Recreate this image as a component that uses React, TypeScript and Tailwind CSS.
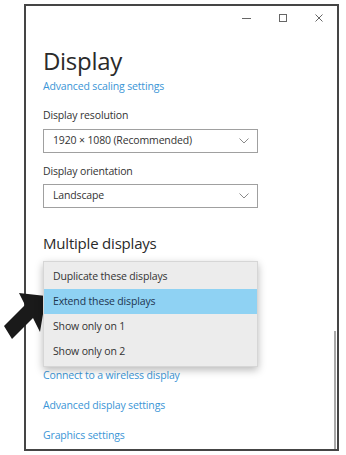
import React from 'react';

const font = { fontFamily: '"Open Sans", "Noto Sans", Arial, sans-serif' };

const Chevron: React.FC = () => (
    <svg width="10" height="6" viewBox="0 0 10 6" fill="none">
        <path d="M0.5 0.5 L5 5 L9.5 0.5" stroke="#8a8a8a" strokeWidth="1" />
    </svg>
);

const Select: React.FC<{ value: string }> = ({ value }) => (
    <div className="flex h-[24px] w-[215px] items-center justify-between border border-[#a0a0a0] pl-[9px] pr-[8px] text-[10.5px] tracking-[-0.15px] text-[#333]">
        <span>{value}</span>
        <Chevron />
    </div>
);

const Link: React.FC<{ children: React.ReactNode; className?: string }> = ({ children, className }) => (
    <div className={`text-[10.5px] leading-[16px] tracking-[-0.15px] text-[#3a95d6] ${className ?? ''}`}>{children}</div>
);

const menuItems = ['Duplicate these displays', 'Extend these displays', 'Show only on 1', 'Show only on 2'];

export default function App() {
    return (
        <div className="relative h-[455px] w-[346px] bg-white" style={font}>
            <div className="ml-[24px] pt-[4px]">
                <div className="flex h-[447px] w-[315px] flex-col border-2 border-[#454545] bg-white">
                    {/* title bar */}
                    <div className="flex h-[24px] items-center justify-end gap-[28px] pr-[14px] text-[#555]">
                        <svg width="9" height="9" viewBox="0 0 9 9"><path d="M0 4.5 H9" stroke="#666" strokeWidth="1" /></svg>
                        <svg width="8" height="8" viewBox="0 0 8 8"><rect x="0.5" y="0.5" width="7" height="7" fill="none" stroke="#666" strokeWidth="1" /></svg>
                        <svg width="8" height="8" viewBox="0 0 8 8"><path d="M0.5 0.5 L7.5 7.5 M7.5 0.5 L0.5 7.5" stroke="#666" strokeWidth="1" /></svg>
                    </div>
                    <div className="flex flex-1 flex-row">
                        <div className="flex-1 pl-[17px]">
                            <h1 className="mt-[17px] text-[24px] leading-[28px] tracking-[-0.3px] text-[#2a2a2a]">Display</h1>
                            <Link className="mt-[3px]">Advanced scaling settings</Link>
                            <div className="mt-[13px] text-[10.5px] leading-[16px] tracking-[-0.15px] text-[#333]">Display resolution</div>
                            <div className="mt-[6px]">
                                <Select value="1920 × 1080 (Recommended)" />
                            </div>
                            <div className="mt-[10px] text-[10.5px] leading-[16px] tracking-[-0.15px] text-[#333]">Display orientation</div>
                            <div className="mt-[5px]">
                                <Select value="Landscape" />
                            </div>
                            <h2 className="mt-[24px] text-[15px] leading-[22px] tracking-[-0.2px] text-[#2a2a2a]">Multiple displays</h2>
                            <div className="relative z-10 mt-[7px] w-[215px] border border-[#d6d6d6] bg-[#ececec] py-[2px] shadow-[0_3px_8px_rgba(0,0,0,0.28)]">
                                {menuItems.map((item, i) => (
                                    <div
                                        key={item}
                                        className={`flex h-[25px] items-center pl-[9px] text-[10.5px] tracking-[-0.15px] ${i === 1 ? 'bg-[#8fd2f3] text-[#1d3550]' : 'text-[#333]'}`}
                                    >
                                        {item}
                                    </div>
                                ))}
                            </div>
                            <Link>Connect to a wireless display</Link>
                            <Link className="mt-[14px]">Advanced display settings</Link>
                            <Link className="mt-[14px]">Graphics settings</Link>
                        </div>
                        {/* scrollbar */}
                        <div className="mr-[1px] flex w-[2px] flex-col justify-end">
                            <div className="h-[118px] bg-[#a9a9a9]" />
                        </div>
                    </div>
                </div>
            </div>
            {/* pointer arrow */}
            <svg className="absolute left-0 top-[288px]" width="50" height="55" viewBox="0 0 50 55">
                <polygon points="46,8 19,5 25,17 4,38 12,51 33,30 40,44" fill="#1a1a1a" />
            </svg>
        </div>
    );
}
